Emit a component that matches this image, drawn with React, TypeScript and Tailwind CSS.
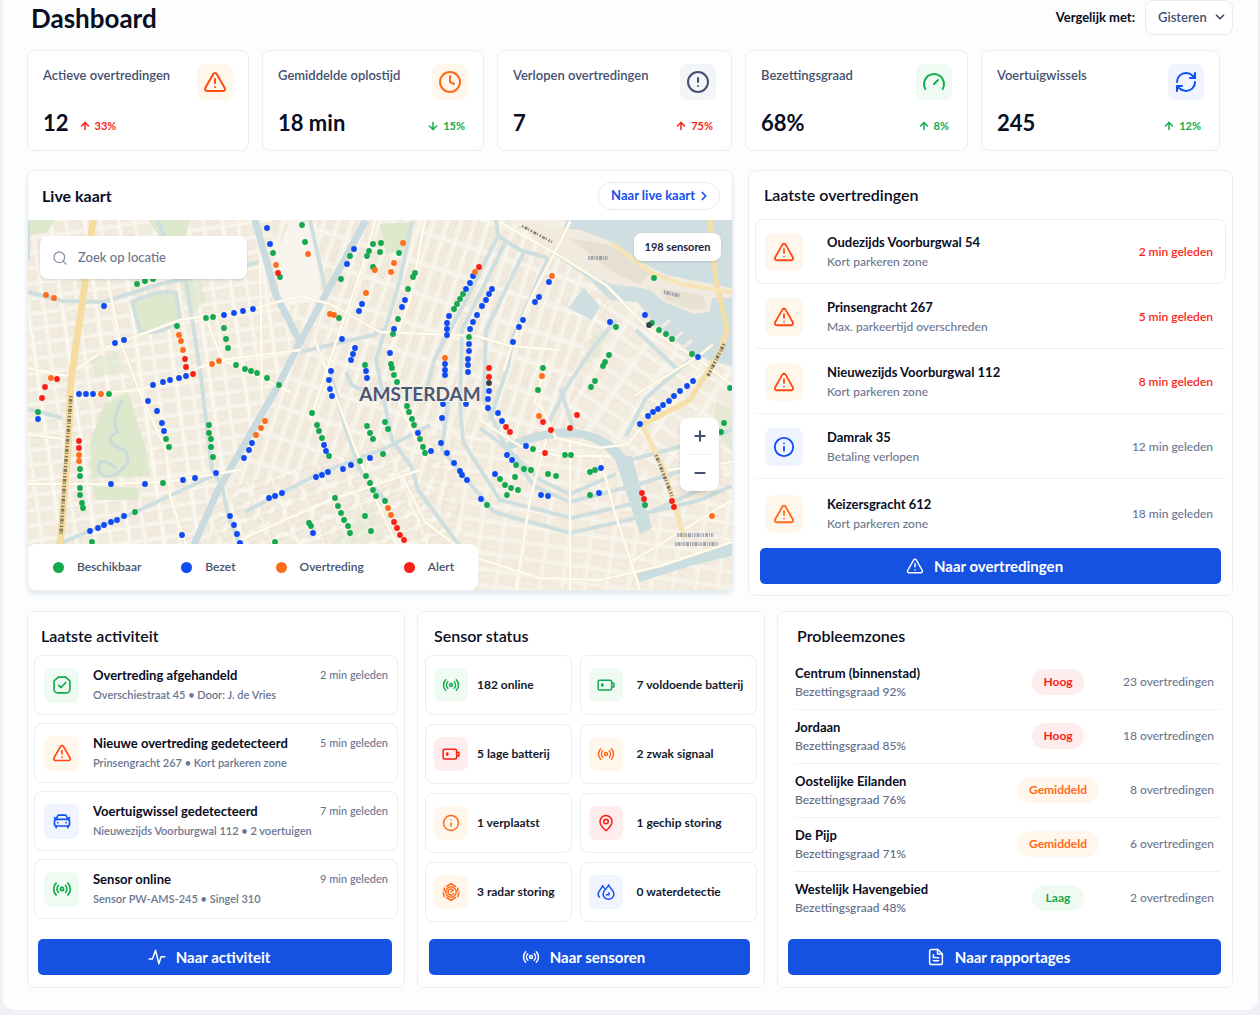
import type { ComponentType, ReactNode, SVGProps } from "react";
import {
  ArrowDown,
  ArrowUp,
  CarFront,
  ChevronDown,
  ChevronRight,
  CircleAlert,
  Clock,
  Gauge,
  Info,
  MapPin,
  Minus,
  Plus,
  Radio,
  RefreshCw,
  Search,
  TriangleAlert,
} from "lucide-react";
import clsx from "clsx";

type IconType = ComponentType<{ className?: string; strokeWidth?: number }>;
type Tone = "orange" | "amber" | "green" | "blue" | "red" | "slate";

const tones: Record<Tone, string> = {
  orange: "bg-[#fff6ec] text-[#ff4a12]",
  amber: "bg-[#fff6ec] text-[#ff6a1a]",
  green: "bg-[#effaf3] text-[#12ab4f]",
  blue: "bg-[#eff4ff] text-[#0f4ff5]",
  red: "bg-[#ffecec] text-[#fb1f16]",
  slate: "bg-[#f4f5f8] text-[#44506d]",
};

/* ---------- Eigen iconen ---------- */

function Svg({ children, strokeWidth = 2, ...props }: SVGProps<SVGSVGElement>) {
  return (
    <svg
      viewBox="0 0 24 24"
      fill="none"
      stroke="currentColor"
      strokeWidth={strokeWidth}
      strokeLinecap="round"
      strokeLinejoin="round"
      aria-hidden="true"
      {...props}
    >
      {children}
    </svg>
  );
}

const CheckTile: IconType = (props) => (
  <Svg {...props}>
    <path d="M7.5 2.5h9L21.5 7v10a4.5 4.5 0 0 1-4.500 4.500H7A4.500 4.500 0 0 1 2.500 17V7z" />
    <path d="m8 12.500 3 2.500 5.500-6" />
  </Svg>
);

const BatteryCell: IconType = (props) => (
  <Svg {...props}>
    <rect x="1.500" y="5.500" width="18" height="13" rx="2" />
    <path d="M20 9.500h2.500v5H20" />
    <path d="M7 11.500v1" strokeWidth={3.500} />
  </Svg>
);

const RadarHex: IconType = (props) => (
  <Svg {...props}>
    <path d="M6 4.500 12 1l6 3.500M21 6.500v4M22.500 13l-1.500 5M18 19.500 12 23l-6-3.500M3 18l-1.500-5M3 10.500v-4" />
    <circle cx="12" cy="12" r="7" />
    <path d="M15 9.500A4 4 0 1 0 15.500 14M12 12l3-2.500" />
  </Svg>
);

const WaterDrops: IconType = (props) => (
  <Svg {...props}>
    <path d="M15.500 2.500c1 4 7 7 7 12a7.200 7.200 0 0 1-14.400 0c0-5 6.400-8 7.400-12Z" />
    <path d="M12.500 15.500h3.500v-2.500" />
    <path d="M9.500 7 7.500 3.500C6 8 1.500 10.500 1.500 15c0 1.500.5 2.500 1.500 3.500" />
  </Svg>
);

const Pulse: IconType = (props) => (
  <Svg {...props}>
    <path d="M1.500 14.500h4.500L10 3l4.500 18 3-9.500h5" />
  </Svg>
);

const Report: IconType = (props) => (
  <Svg {...props}>
    <path d="M14.500 2H6a2.500 2.500 0 0 0-2.500 2.500v15A2.500 2.500 0 0 0 6 22h12a2.500 2.500 0 0 0 2.500-2.500V8z" />
    <path d="M14 2v6h6M8.500 9v3.500h3M8.500 17h7M13 13h2.500" />
  </Svg>
);

/* ---------- Data ---------- */

const stats: {
  label: string;
  value: string;
  delta: string;
  up: boolean;
  good: boolean;
  icon: IconType;
  tone: Tone;
  inline?: boolean;
}[] = [
  { label: "Actieve overtredingen", value: "12", delta: "33%", up: true, good: false, icon: TriangleAlert, tone: "orange", inline: true },
  { label: "Gemiddelde oplostijd", value: "18 min", delta: "15%", up: false, good: true, icon: Clock, tone: "amber" },
  { label: "Verlopen overtredingen", value: "7", delta: "75%", up: true, good: false, icon: CircleAlert, tone: "slate" },
  { label: "Bezettingsgraad", value: "68%", delta: "8%", up: true, good: true, icon: Gauge, tone: "green" },
  { label: "Voertuigwissels", value: "245", delta: "12%", up: true, good: true, icon: RefreshCw, tone: "blue" },
];

const violations: { title: string; sub: string; time: string; urgent: boolean; icon: IconType; tone: Tone }[] = [
  { title: "Oudezijds Voorburgwal 54", sub: "Kort parkeren zone", time: "2 min geleden", urgent: true, icon: TriangleAlert, tone: "orange" },
  { title: "Prinsengracht 267", sub: "Max. parkeertijd overschreden", time: "5 min geleden", urgent: true, icon: TriangleAlert, tone: "orange" },
  { title: "Nieuwezijds Voorburgwal 112", sub: "Kort parkeren zone", time: "8 min geleden", urgent: true, icon: TriangleAlert, tone: "orange" },
  { title: "Damrak 35", sub: "Betaling verlopen", time: "12 min geleden", urgent: false, icon: Info, tone: "blue" },
  { title: "Keizersgracht 612", sub: "Kort parkeren zone", time: "18 min geleden", urgent: false, icon: TriangleAlert, tone: "amber" },
];

const activities: { title: string; sub: string; time: string; icon: IconType; tone: Tone }[] = [
  { title: "Overtreding afgehandeld", sub: "Overschiestraat 45 • Door: J. de Vries", time: "2 min geleden", icon: CheckTile, tone: "green" },
  { title: "Nieuwe overtreding gedetecteerd", sub: "Prinsengracht 267 • Kort parkeren zone", time: "5 min geleden", icon: TriangleAlert, tone: "orange" },
  { title: "Voertuigwissel gedetecteerd", sub: "Nieuwezijds Voorburgwal 112 • 2 voertuigen", time: "7 min geleden", icon: CarFront, tone: "blue" },
  { title: "Sensor online", sub: "Sensor PW-AMS-245 • Singel 310", time: "9 min geleden", icon: Radio, tone: "green" },
];

const sensors: { label: string; icon: IconType; tone: Tone }[] = [
  { label: "182 online", icon: Radio, tone: "green" },
  { label: "7 voldoende batterij", icon: BatteryCell, tone: "green" },
  { label: "5 lage batterij", icon: BatteryCell, tone: "red" },
  { label: "2 zwak signaal", icon: Radio, tone: "amber" },
  { label: "1 verplaatst", icon: Info, tone: "amber" },
  { label: "1 gechip storing", icon: MapPin, tone: "red" },
  { label: "3 radar storing", icon: RadarHex, tone: "amber" },
  { label: "0 waterdetectie", icon: WaterDrops, tone: "blue" },
];

const zones: { name: string; rate: string; level: "Hoog" | "Gemiddeld" | "Laag"; count: number }[] = [
  { name: "Centrum (binnenstad)", rate: "92%", level: "Hoog", count: 23 },
  { name: "Jordaan", rate: "85%", level: "Hoog", count: 18 },
  { name: "Oostelijke Eilanden", rate: "76%", level: "Gemiddeld", count: 8 },
  { name: "De Pijp", rate: "71%", level: "Gemiddeld", count: 6 },
  { name: "Westelijk Havengebied", rate: "48%", level: "Laag", count: 2 },
];

const legend = [
  { label: "Beschikbaar", color: "bg-[#14a94e]" },
  { label: "Bezet", color: "bg-[#0f4bf5]" },
  { label: "Overtreding", color: "bg-[#ff6d1c]" },
  { label: "Alert", color: "bg-[#fb1f16]" },
];

// Sensorposities per status, in kaartcoördinaten "x,y"
const dots = {
  "#0f4bf5":
    "267,228 270,244 354,249 347,264 104,306 115,343 124,340 224,315 234,313 243,311 253,309 362,304 359,311 342,339 355,348 353,354 351,360 331,371 329,380 366,371 367,378 153,385 163,382 170,380 179,378 186,376 405,300 402,307 394,329 390,353 473,276 470,283 466,289 449,316 447,323 447,329 447,335 492,289 489,294 486,300 482,306 477,315 473,322 470,329 469,344 469,351 468,359 468,365 468,372 445,364 445,370 445,375 549,282 539,297 535,302 523,320 519,327 513,342 610,322 645,315 698,357 693,381 38,419 79,394 86,394 93,394 148,401 157,411 162,423 164,431 216,473 195,478 183,480 145,484 111,484 252,443 249,450 244,458 90,531 98,528 104,525 111,522 117,520 124,516 182,535 230,516 234,525 237,534 240,543 269,498 275,496 282,493 316,477 322,475 328,472 343,469 351,465 370,458 324,445 326,451 313,533 330,389 332,396 489,391 488,399 488,408 498,413 502,421 443,404 442,418 466,404 418,433 441,443 431,451 447,453 454,463 460,471 462,475 467,480 481,499 507,455 512,460 526,446 495,474 541,495 548,496 601,468 599,493 640,424 648,416 653,412 658,409 663,405 669,401 674,396 680,391 687,386",
  "#14a94e":
    "273,253 302,225 305,242 350,256 341,279 373,244 369,251 367,256 381,243 380,252 373,267 137,284 145,281 153,279 206,318 213,317 177,326 224,328 226,339 228,348 339,318 236,365 245,369 251,371 257,373 267,378 279,385 365,365 280,277 399,253 415,273 413,277 408,289 398,319 393,334 391,364 392,368 394,375 397,382 463,294 460,299 457,304 454,309 469,337 543,368 609,355 605,362 603,366 595,381 654,278 652,323 659,330 666,334 672,339 692,354 616,327 38,412 109,394 80,469 80,476 80,488 80,495 82,503 83,508 92,542 166,439 169,447 209,425 209,433 211,439 211,447 213,457 163,483 312,413 317,425 319,431 322,438 329,456 360,461 366,476 370,483 373,490 376,496 367,426 370,433 373,439 335,498 338,506 341,513 344,520 348,526 350,533 309,523 311,526 365,516 371,531 275,542 135,512 407,406 409,412 412,419 414,425 420,439 423,447 425,453 385,422 388,429 383,454 385,501 538,390 591,387 533,449 565,455 571,455 516,465 524,469 531,470 548,474 556,476 500,479 505,485 511,488 518,490 590,472 595,470 590,495 645,505 724,423 721,432 730,388 515,477 507,495 487,505",
  "#ff6d1c":
    "308,254 276,265 375,270 366,293 330,314 334,315 46,295 54,298 179,335 181,341 183,350 212,364 219,361 51,378 403,243 394,263 391,272 475,272 552,276 445,358 542,376 101,394 79,455 79,461 265,421 261,428 256,435 539,416 388,508 391,515 712,516",
  "#fb1f16":
    "278,273 185,359 186,367 193,374 57,379 479,267 489,368 489,377 45,387 42,398 79,441 79,448 506,427 510,432 577,415 570,428 551,430 543,422 545,453 642,493 644,499 672,501 674,507 394,522 397,528 400,535 404,540",
  "#3a3f4a": "649,325 489,383",
};

const canals = [
  "M28 292 62 301 104 302 160 284 228 270 260 262",
  "M310 220 326 292",
  "M300 352 373 335 386 328",
  "M186 280 200 370 212 470 222 486 228 515 240 545",
  "M56 545 140 510 216 474",
  "M28 409 62 418",
  "M28 220 28 260",
  "M158 220 164 236",
  "M245 512 318 474 386 448 430 425",
  "M330 372 346 430 360 470 385 500",
  "M346 372 352 385 366 392",
  "M412 222 400 280 376 360 392 440 412 468 418 490 470 560",
  "M496 220 498 236 466 300 434 360 424 400",
  "M498 236 520 250 548 258",
  "M524 252 486 330 484 400 502 440 534 486 570 502 640 484 690 468",
  "M505 243 462 330 460 404 463 442 500 500 572 518 640 502",
  "M448 400 442 450 494 512 570 533 636 518 700 490",
  "M548 258 512 340 508 366 490 420",
  "M480 428 504 446 540 480 570 494 616 474",
  "M616 320 590 352 566 388 548 424",
  "M560 388 574 430",
  "M636 330 680 372",
  "M690 360 646 398 626 436",
  "M652 512 700 500 732 486",
  "M630 460 690 444 732 430",
];

const mainRoads = [
  "M28 368 66 376 110 346 180 320 255 308 300 296 330 304 380 332 476 336 510 346 560 350",
  "M28 484 110 484 165 482 240 470",
  "M84 394 140 390 220 360 300 350",
  "M104 262 120 340 138 388 166 450 170 496 186 545",
  "M260 262 262 390",
  "M375 220 362 268 340 330 310 420",
  "M425 220 410 300 390 350 398 400 425 460",
  "M315 340 330 380 352 440 376 500 404 560",
  "M403 478 425 522 470 556 540 578 600 580 660 566 732 542",
  "M500 222 560 256 606 285 650 330 700 360 732 385",
  "M570 222 556 250 530 300 510 350 504 370",
  "M540 404 556 438 600 448 628 444 650 416 700 375",
  "M480 420 520 446 560 456 610 456",
  "M546 440 530 500 516 590",
  "M570 440 570 590",
  "M600 456 614 510 640 590",
  "M548 360 534 404",
  "M636 395 700 355 712 345",
  "M28 434 70 440",
  "M206 318 222 360 236 366 290 392",
  "M240 540 330 500 420 470",
  "M668 470 732 462",
  "M634 560 732 500",
];

/* ---------- Onderdelen ---------- */

function IconTile({ icon: Icon, tone, size, iconSize }: { icon: IconType; tone: Tone; size: string; iconSize: string }) {
  return (
    <span className={clsx("flex shrink-0 items-center justify-center rounded-lg", size, tones[tone])}>
      <Icon className={iconSize} strokeWidth={2} />
    </span>
  );
}

function Card({ className, children }: { className?: string; children: ReactNode }) {
  return <section className={clsx("rounded-lg border border-[#ebedf3] bg-white", className)}>{children}</section>;
}

function ActionButton({ icon: Icon, children }: { icon: IconType; children: ReactNode }) {
  return (
    <button
      type="button"
      className="flex h-9 w-full items-center justify-center gap-2.5 rounded-[5px] bg-[#1652e2] pr-3 text-[15px] font-bold text-white"
    >
      <Icon className="size-[18px]" strokeWidth={2} />
      {children}
    </button>
  );
}

function StatCard({ stat }: { stat: (typeof stats)[number] }) {
  const Arrow = stat.up ? ArrowUp : ArrowDown;
  return (
    <Card className="flex h-[101px] flex-col justify-between px-[15px] pt-[13px] pb-[13px]">
      <div className="flex items-start justify-between">
        <h2 className="pt-[3px] text-[13px] leading-4 font-semibold text-[#44506d]">{stat.label}</h2>
        <IconTile icon={stat.icon} tone={stat.tone} size="size-9" iconSize="size-6" />
      </div>
      <div className={clsx("flex items-center", stat.inline ? "gap-2.5" : "justify-between")}>
        <p className="text-[22px] leading-7 font-bold text-[#080d1f]">{stat.value}</p>
        <p
          className={clsx(
            "flex items-center gap-1 pt-1.5 pr-[3px] text-[11px] leading-4 font-bold",
            stat.good ? "text-[#12ab4f]" : "text-[#fb1f16]"
          )}
        >
          <Arrow className="size-3" strokeWidth={3} />
          {stat.delta}
        </p>
      </div>
    </Card>
  );
}

function CityMap() {
  return (
    <svg
      viewBox="28 220 704 370"
      preserveAspectRatio="xMidYMid slice"
      className="absolute inset-0 size-full"
      role="img"
      aria-label="Kaart van Amsterdam met sensoren"
    >
      <defs>
        <pattern id="west" width="34" height="15" patternUnits="userSpaceOnUse" patternTransform="rotate(-8)">
          <path d="M0 0H34M0 0V15M19 0V15" stroke="#fffdf6" strokeWidth="1.6" fill="none" />
          <path d="M4 3.500H15V11.500H4ZM23 3.500H31V11.500H23Z" stroke="#e9e1d2" strokeWidth="0.7" fill="#f2ebdf" />
        </pattern>
        <pattern id="jordaan" width="13" height="30" patternUnits="userSpaceOnUse" patternTransform="rotate(18)">
          <path d="M0 0H13M0 0V30" stroke="#fffdf6" strokeWidth="1.6" fill="none" />
          <path d="M4 4H9V26H4Z" stroke="#e7dfd0" strokeWidth="0.7" fill="#f1eadd" />
        </pattern>
        <pattern id="south" width="24" height="14" patternUnits="userSpaceOnUse" patternTransform="rotate(-22)">
          <path d="M0 0H24M0 0V14" stroke="#fffdf6" strokeWidth="1.6" fill="none" />
          <path d="M4 4H20V10H4Z" stroke="#e7dfd0" strokeWidth="0.7" fill="#f2ebdf" />
        </pattern>
        <pattern id="east" width="28" height="17" patternUnits="userSpaceOnUse" patternTransform="rotate(34)">
          <path d="M0 0H28M0 0V17" stroke="#fffdf6" strokeWidth="1.6" fill="none" />
          <path d="M5 4H23V13H5Z" stroke="#e9e1d2" strokeWidth="0.7" fill="#f2ebdf" />
        </pattern>
        <pattern id="belt" width="22" height="16" patternUnits="userSpaceOnUse" patternTransform="rotate(8)">
          <path d="M0 0H22M0 0V16" stroke="#fffaf0" strokeWidth="1.6" fill="none" />
          <path d="M4 4H18V12H4Z" stroke="#eae0ce" strokeWidth="0.7" fill="#f4ecde" />
        </pattern>
      </defs>

      {/* Bebouwing */}
      <rect x="28" y="220" width="704" height="370" fill="#f5f0e5" />
      <path d="M28 220H270L300 350 220 490 180 590H28Z" fill="url(#west)" />
      <path d="M270 220H510L450 400 470 590H180L300 350Z" fill="url(#jordaan)" />
      <path d="M218 490 400 440 480 590H180Z" fill="url(#south)" />
      <path d="M510 220 620 290 560 440H450L470 320Z" fill="url(#jordaan)" />
      <path d="M600 280 732 370V500L560 440Z" fill="url(#east)" />
      <path d="M425 430 560 440 640 470 732 470V590H450Z" fill="url(#belt)" />

      {/* Parken */}
      <g fill="#dde8cd">
        <path d="M132 302Q160 288 176 293L180 318Q164 336 140 331Z" stroke="#d0dfdd" strokeWidth="4" />
        <path d="M104 404 128 392 146 450 150 476 92 478 90 442Z" />
        <path d="M92 486 140 488 138 500 96 500Z" />
        <path d="M28 220H56L46 232 28 236ZM148 220H190L184 244 160 238Z" />
        <path d="M180 280 196 272 206 300 190 316Z" opacity="0.7" />
        <path d="M380 224 412 222 404 250 386 254Z" />
        <path d="M594 336 610 328 598 356 582 366Z" opacity="0.6" />
        <path d="M716 400 732 410V450L714 430Z" opacity="0.7" />
        <path d="M330 545 372 505 386 540Z" opacity="0.4" />
        <path d="M90 360 120 350 124 372 96 376Z" opacity="0.6" />
      </g>
      <path
        d="M122 400Q110 424 118 432 C100 440 118 448 124 450 134 460 124 468 116 474 106 480 96 474 99 464 102 458 112 464 116 468"
        stroke="#c9dcda"
        strokeWidth="3"
        fill="none"
      />
      <path d="M290 222H316L320 300 284 306 272 262Z" fill="#f8f5ee" />

      {/* Water */}
      <path d="M566 220H732V366L713 362 690 352 653 322 637 302 610 300 588 278 556 256Z" fill="#cfdfe1" />
      <path
        d="M520 222 580 230 613 242 640 262 667 275 732 288V298L712 298 710 312 694 314 664 302 650 290 640 288 610 284 573 264 540 246Z"
        fill="#f0eadf"
      />
      <path d="M570 238 612 246 650 274 640 284 612 272Z" fill="#e5dfd4" />
      <path d="M660 288 704 296 706 308 692 310 666 300Z" fill="#e8e2d2" />
      <path d="M668 346 682 332M678 352 692 340M656 332 670 320" stroke="#f0eadf" strokeWidth="3" />
      <path d="M584 288 600 306 592 320 568 308Z" fill="#cfdfe1" />
      <path d="M614 456H632L652 528 640 534Z" fill="#cbdddf" />
      <path d="M500 446Q550 422 586 431 610 436 626 456L616 461Q600 442 580 438 550 434 506 451Z" fill="#cbdddf" />
      <path d="M636 574 700 552 732 540V556L690 566 640 582Z" fill="#cbdddf" />
      <g fill="none" stroke="#cfdfe0" strokeWidth="4" strokeLinejoin="round">
        {canals.map((d) => (
          <path key={d} d={d} />
        ))}
      </g>
      <path
        d="M300 342 278 386 218 490 194 545M300 342 366 220M255 220 276 295 300 342"
        fill="none"
        stroke="#c9dbde"
        strokeWidth="7"
      />

      {/* Wegen */}
      <g fill="none" strokeLinejoin="round" strokeLinecap="round">
        <g stroke="#f4e9cb" strokeWidth="3">
          {mainRoads.map((d) => (
            <path key={d} d={d} />
          ))}
        </g>
        <g stroke="#fffdf5" strokeWidth="2">
          {mainRoads.map((d) => (
            <path key={d} d={d} />
          ))}
        </g>
        <path d="M93 220 84 290 71 380 68 450 60 545" stroke="#f5dd9f" strokeWidth="7" />
        <path d="M710 220 716 280 727 330 720 352 690 400 640 426" stroke="#f5dfa8" strokeWidth="5" />
        <path d="M613 244 650 272 680 284 732 292" stroke="#f6e4b4" strokeWidth="4" />
        <path d="M644 428 664 470 684 536" stroke="#f5e3b5" strokeWidth="5" />
      </g>
      <g fill="none" stroke="#5d5648" strokeWidth="3.500" strokeDasharray="1.500 1.500 3 1 1 2" opacity="0.75">
        <path d="M71 396 66 460 61 534" />
        <path d="M656 455 672 496" />
        <path d="M724 344 708 376" />
        <path d="M522 226 552 242" strokeWidth="2.500" />
      </g>
      <g fill="none" stroke="#6d7891" strokeWidth="4" strokeDasharray="1.500 1 3 1 1 1" opacity="0.6">
        <path d="M588 258H608" />
        <path d="M664 292 680 296" />
        <path d="M677 535H714M675 544H718" />
      </g>

      {Object.entries(dots).map(([color, points]) => (
        <g key={color} fill={color}>
          {points.split(" ").map((point) => {
            const [x, y] = point.split(",");
            return <circle key={point} cx={x} cy={y} r="2.900" />;
          })}
        </g>
      ))}

      <text
        x="420"
        y="401"
        textAnchor="middle"
        fill="#4b5675"
        stroke="#f7f2e8"
        strokeWidth="2"
        paintOrder="stroke"
        className="text-[19px] font-bold"
      >
        AMSTERDAM
      </text>
    </svg>
  );
}

function LiveMap() {
  return (
    <Card className="overflow-hidden shadow-md shadow-slate-200">
      <div className="flex h-[49px] items-center justify-between pr-3 pl-3.5">
        <h2 className="text-base font-bold text-[#080d1f]">Live kaart</h2>
        <a
          href="#kaart"
          className="flex h-7 items-center gap-0.5 rounded-full border border-[#e8ebf3] pr-2 pl-3 text-[13px] font-bold text-[#1450ea]"
        >
          Naar live kaart
          <ChevronRight className="size-3.5" strokeWidth={3} />
        </a>
      </div>
      <div className="relative h-[370px]">
        <CityMap />
        <label className="absolute top-4 left-3 flex h-[43px] w-[207px] items-center gap-2.5 rounded-lg bg-white px-3 shadow-sm">
          <Search className="size-4 shrink-0 text-[#8d96a9]" strokeWidth={2} />
          <input
            type="text"
            aria-label="Zoek op locatie"
            placeholder="Zoek op locatie"
            className="w-full min-w-0 text-[13px] font-medium outline-none placeholder:text-[#6b7690]"
          />
        </label>
        <span className="absolute top-[13px] right-[11px] flex h-7 w-[87px] items-center justify-center rounded-lg bg-white text-[11px] font-bold text-[#1d253b] shadow-sm">
          198 sensoren
        </span>
        <div className="absolute right-[13px] bottom-[99px] flex w-[39px] flex-col rounded-lg bg-white text-[#44506d] shadow-md">
          <button type="button" aria-label="Inzoomen" className="flex h-9 items-center justify-center">
            <Plus className="size-4" strokeWidth={3} />
          </button>
          <hr className="mx-2 border-[#eef0f4]" />
          <button type="button" aria-label="Uitzoomen" className="flex h-9 items-center justify-center">
            <Minus className="size-4" strokeWidth={3} />
          </button>
        </div>
        <ul className="absolute bottom-0 left-0 flex h-[46px] items-center gap-10 rounded-lg bg-white pr-6 pl-[25px]">
          {legend.map((item) => (
            <li key={item.label} className="flex items-center gap-[13px] text-xs font-semibold text-[#44506d]">
              <span className={clsx("size-[11px] rounded-full", item.color)} />
              {item.label}
            </li>
          ))}
        </ul>
      </div>
    </Card>
  );
}

function Violations() {
  return (
    <Card className="px-1.5 pb-[11px]">
      <h2 className="flex h-12 items-center pl-[9px] text-base font-semibold text-[#080d1f]">Laatste overtredingen</h2>
      <ul>
        {violations.map((item, i) => (
          <li
            key={item.title}
            className={clsx(
              "flex h-[65px] items-center border px-[9px] pr-3 last:h-[69px]",
              i === 0 ? "rounded-lg border-[#e9ecf3]" : "border-transparent",
              i > 0 && i < violations.length - 1 && "border-b-[#eff1f5]"
            )}
          >
            <IconTile icon={item.icon} tone={item.tone} size="size-[38px]" iconSize="size-[22px]" />
            <div className="ml-6 grow">
              <p className="text-[13px] leading-5 font-bold text-[#080d1f]">{item.title}</p>
              <p className="text-xs leading-5 font-medium text-[#6b7690]">{item.sub}</p>
            </div>
            <time className={clsx("text-xs", item.urgent ? "font-semibold text-[#fb1f16]" : "font-medium text-[#6b7690]")}>
              {item.time}
            </time>
          </li>
        ))}
      </ul>
      <div className="px-[5px]">
        <ActionButton icon={TriangleAlert}>Naar overtredingen</ActionButton>
      </div>
    </Card>
  );
}

function Activity() {
  return (
    <Card className="flex flex-col px-1.5 pb-3">
      <h2 className="flex h-[43px] items-center pt-1 pl-[7px] text-base font-semibold text-[#080d1f]">Laatste activiteit</h2>
      <ul className="flex flex-col gap-2">
        {activities.map((item) => (
          <li key={item.title} className="flex h-[60px] items-center rounded-lg border border-[#ebedf3] px-[9px]">
            <IconTile icon={item.icon} tone={item.tone} size="size-[35px]" iconSize="size-5" />
            <div className="ml-3.5 grow">
              <div className="flex items-center justify-between">
                <p className="text-[13px] leading-5 font-bold text-[#080d1f]">{item.title}</p>
                <time className="text-[11px] font-medium text-[#6b7690]">{item.time}</time>
              </div>
              <p className="text-[11px] leading-5 font-semibold text-[#6b7690]">{item.sub}</p>
            </div>
          </li>
        ))}
      </ul>
      <div className="mt-auto pr-1.5 pl-1">
        <ActionButton icon={Pulse}>Naar activiteit</ActionButton>
      </div>
    </Card>
  );
}

function SensorStatus() {
  return (
    <Card className="flex flex-col px-[7px] pb-3">
      <h2 className="flex h-[43px] items-center pt-1 pl-[9px] text-base font-semibold text-[#080d1f]">Sensor status</h2>
      <ul className="grid grid-cols-[147fr_178fr] gap-x-2 gap-y-[9px]">
        {sensors.map((item, i) => (
          <li
            key={item.label}
            className={clsx(
              "flex h-[60px] items-center rounded-lg border border-[#ebedf3] pl-2 text-xs font-bold whitespace-nowrap text-[#141a2e]",
              i % 2 === 0 ? "gap-[9px]" : "gap-3.5"
            )}
          >
            <IconTile icon={item.icon} tone={item.tone} size="size-[34px]" iconSize="size-[18px]" />
            {item.label}
          </li>
        ))}
      </ul>
      <div className="mt-auto pr-[7px] pl-1">
        <ActionButton icon={Radio}>Naar sensoren</ActionButton>
      </div>
    </Card>
  );
}

function ProblemZones() {
  const badge = {
    Hoog: "w-[52px] bg-[#ffecec] text-[#fb1f16]",
    Gemiddeld: "w-[82px] bg-[#fff6ec] text-[#ff6a1a]",
    Laag: "w-[52px] bg-[#effaf3] text-[#12ab4f]",
  };

  return (
    <Card className="flex flex-col pb-3">
      <h2 className="flex h-[43px] items-center pt-1 pl-[19px] text-base font-semibold text-[#080d1f]">Probleemzones</h2>
      <div className="pr-3 pl-[17px]">
        <table className="w-full">
          <tbody>
            {zones.map((zone) => (
              <tr key={zone.name} className="h-[54px] border-b border-[#eff1f5] last:border-b-0">
                <th scope="row" className="text-left font-normal">
                  <p className="text-[13px] leading-5 font-bold text-[#080d1f]">{zone.name}</p>
                  <p className="text-xs leading-[18px] font-medium text-[#5f6a86]">Bezettingsgraad {zone.rate}</p>
                </th>
                <td className="w-[82px]">
                  <span
                    className={clsx("mx-auto flex h-[26px] items-center justify-center rounded-full text-xs font-bold", badge[zone.level])}
                  >
                    {zone.level}
                  </span>
                </td>
                <td className="w-[121px] pr-1.5 text-right text-xs font-medium text-[#6b7690]">{zone.count} overtredingen</td>
              </tr>
            ))}
          </tbody>
        </table>
      </div>
      <div className="mt-auto pr-[11px] pl-2.5">
        <ActionButton icon={Report}>Naar rapportages</ActionButton>
      </div>
    </Card>
  );
}

export default function App() {
  return (
    <div className="min-h-screen bg-[#f0f1f6] pr-0.5 pb-[5px] pl-[3px] font-[Lato,sans-serif]">
      <main className="rounded-b-xl bg-[#fcfdfd] pr-[25px] pb-[22px] pl-6">
        <header className="flex h-[50px] items-start justify-between">
          <h1 className="pt-0.5 pl-1 text-[26px] leading-8 font-bold text-[#080d1f]">Dashboard</h1>
          <div className="flex items-center gap-2.5">
            <label htmlFor="vergelijk" className="text-[13px] font-bold text-[#080d1f]">
              Vergelijk met:
            </label>
            <div className="relative">
              <select
                id="vergelijk"
                className="h-[35px] w-[88px] appearance-none rounded-lg border border-[#e8ebf2] bg-white pl-3 text-[13px] font-semibold text-[#44506d]"
              >
                <option>Gisteren</option>
              </select>
              <ChevronDown className="pointer-events-none absolute top-2.5 right-1.5 size-3.5 text-[#44506d]" strokeWidth={3} />
            </div>
          </div>
        </header>

        <div className="grid grid-cols-[222fr_222fr_235fr_223fr_239fr] gap-[13px] pr-[13px]">
          {stats.map((stat) => (
            <StatCard key={stat.label} stat={stat} />
          ))}
        </div>

        <div className="mt-[19px] grid grid-cols-[706fr_485fr] items-start gap-[15px]">
          <LiveMap />
          <Violations />
        </div>

        <div className="mt-[15px] grid min-h-[377px] grid-cols-[378fr_348fr_456fr] gap-3">
          <Activity />
          <SensorStatus />
          <ProblemZones />
        </div>
      </main>
    </div>
  );
}
